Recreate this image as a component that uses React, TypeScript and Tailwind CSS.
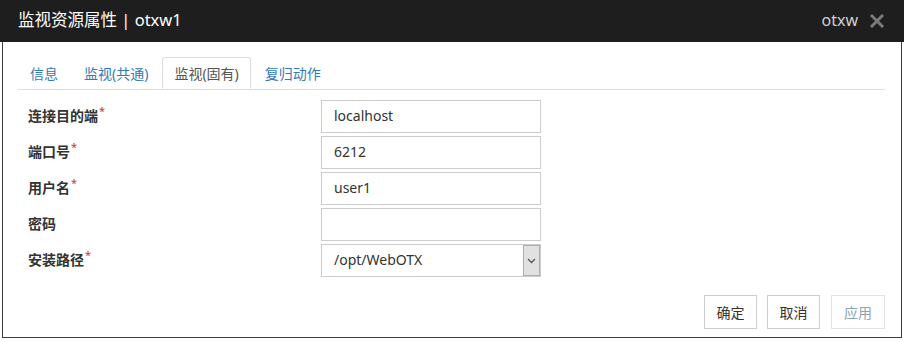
import { useState } from 'react'

const tabs = ['信息', '监视(共通)', '监视(固有)', '复归动作']

interface Field {
  label: string
  value: string
  required: boolean
  select?: boolean
}

const fields: Field[] = [
  { label: '连接目的端', value: 'localhost', required: true },
  { label: '端口号', value: '6212', required: true },
  { label: '用户名', value: 'user1', required: true },
  { label: '密码', value: '', required: false },
  { label: '安装路径', value: '/opt/WebOTX', required: true, select: true },
]

export default function App() {
  const [active, setActive] = useState(2)

  return (
    <div
      className="w-[904px] h-[342px] bg-white overflow-hidden"
      style={{ fontFamily: '"Noto Sans", "Noto Sans CJK SC", sans-serif' }}
    >
      {/* Header */}
      <div className="h-[42px] bg-[#1e1e1e] flex items-center pl-[18px] pr-[20px]">
        <h1 className="text-[16.5px] text-white flex-1 leading-none pb-[2px]">
          监视资源属性 | otxw1
        </h1>
        <span className="text-[16px] text-[#d0d0d0] mr-[12px] pb-[2px]">otxw</span>
        <svg width="14" height="14" viewBox="0 0 14 14" className="mb-[1px]">
          <path
            d="M2 2 L12 12 M12 2 L2 12"
            stroke="#7a7a7a"
            strokeWidth="3"
            strokeLinecap="square"
          />
        </svg>
      </div>

      {/* Body */}
      <div className="mx-[2px] h-[296px] border-x-[1.5px] border-b-[1.5px] border-[#3c3c3c] px-[15px] pt-[15px]">
        {/* Tabs */}
        <div className="flex border-b border-[#dddddd] mr-[1px]">
          {tabs.map((tab, i) => (
            <button
              key={tab}
              onClick={() => setActive(i)}
              className={
                i === active
                  ? 'h-[32px] px-[11px] mr-[2px] -mb-px bg-white border border-[#dddddd] border-b-white rounded-t-[3px] text-[14px] text-[#555555]'
                  : 'h-[32px] px-[11px] mr-[2px] text-[14px] text-[#337ab7] border border-transparent'
              }
            >
              {tab}
            </button>
          ))}
        </div>

        {/* Form */}
        <div className="flex flex-col gap-[3px] mt-[10px] pl-[10px]">
          {fields.map((field) => (
            <div key={field.label} className="flex items-center h-[33px]">
              <label className="w-[293px] text-[14px] font-bold text-[#333333] pb-[2px]">
                {field.label}
                {field.required && (
                  <span className="text-[#c0392b] text-[11px] font-normal align-top relative -top-[2px] ml-[1px]">
                    *
                  </span>
                )}
              </label>
              <div className="w-[220px] h-[33px] border border-[#cccccc] flex items-center">
                <span className="flex-1 pl-[12px] text-[14px] text-[#333333] pb-[2px]">
                  {field.value}
                </span>
                {field.select && (
                  <div className="w-[17px] h-[31px] bg-[#e1e1e1] border border-[#adadad] flex items-center justify-center">
                    <svg width="9" height="6" viewBox="0 0 9 6">
                      <path d="M1 1 L4.5 4.5 L8 1" fill="none" stroke="#555555" strokeWidth="1.3" />
                    </svg>
                  </div>
                )}
              </div>
            </div>
          ))}
        </div>

        {/* Buttons */}
        <div className="flex justify-end mt-[18px] pr-[1px]">
          <button className="w-[53px] h-[34px] border border-[#cccccc] text-[14px] text-[#333333] mr-[10px]">
            确定
          </button>
          <button className="w-[53px] h-[34px] border border-[#cccccc] text-[14px] text-[#333333] mr-[11px]">
            取消
          </button>
          <button className="w-[54px] h-[34px] border border-[#e2e2e2] text-[14px] text-[#8fa3b8]">
            应用
          </button>
        </div>
      </div>
    </div>
  )
}
